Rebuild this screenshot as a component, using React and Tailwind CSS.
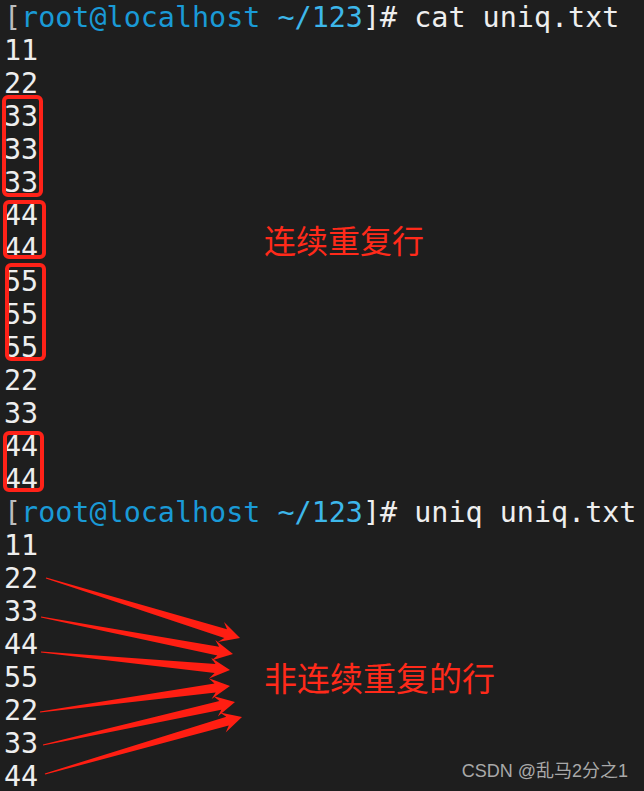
import React from "react";

const W = "text-[#eeeeee]";
const BOX = "absolute border-[4px] border-[#ff2218] rounded-[6px] pointer-events-none";

function Prompt({ cmd }) {
  return (
    <div>
      <span className="text-[#bdbdbd]">[</span>
      <span className="text-[#1a9ad6]">root@localhost</span>
      <span> </span>
      <span className="text-[#3db7ea]">~/123</span>
      <span className={W}>]# {cmd}</span>
    </div>
  );
}

function Line({ t }) {
  return <div>{t}</div>;
}

function Group({ items, boxClass }) {
  return (
    <div className="relative">
      {items.map((t, i) => (
        <Line key={i} t={t} />
      ))}
      <div className={`${BOX} ${boxClass}`} />
    </div>
  );
}

const arrows = [
  [46, 578, 240, 638],
  [41, 617, 233, 654],
  [41, 652, 230, 670],
  [40, 712, 230, 686],
  [43, 745, 235, 702],
  [45, 774, 242, 717],
];

function arrowPoints([x0, y0, x1, y1]) {
  const dx = x1 - x0;
  const dy = y1 - y0;
  const L = Math.hypot(dx, dy);
  const ux = dx / L;
  const uy = dy / L;
  const nx = -uy;
  const ny = ux;
  const hl = 15;
  const hw = 10.5;
  const sw = 4.5;
  const back = 5;
  const bx = x1 - ux * hl;
  const by = y1 - uy * hl;
  const p = [
    [x0 + nx * 0.6, y0 + ny * 0.6],
    [bx + nx * sw, by + ny * sw],
    [bx - ux * back + nx * hw, by - uy * back + ny * hw],
    [x1, y1],
    [bx - ux * back - nx * hw, by - uy * back - ny * hw],
    [bx - nx * sw, by - ny * sw],
    [x0 - nx * 0.6, y0 - ny * 0.6],
  ];
  return p.map((q) => q[0].toFixed(1) + "," + q[1].toFixed(1)).join(" ");
}

export default function App() {
  return (
    <div className="relative w-[644px] h-[791px] bg-[#1e1e1e] overflow-hidden">
      <div
        className={`flex flex-col pl-[4px] pt-[1px] text-[28.4px] leading-[33px] whitespace-pre ${W}`}
        style={{ fontFamily: '"DejaVu Sans Mono", monospace' }}
      >
        <Prompt cmd="cat uniq.txt" />
        <Line t="11" />
        <Line t="22" />
        <Group items={["33", "33", "33"]} boxClass="-left-[2px] -top-[5px] bottom-[2px] w-[41px]" />
        <Group items={["44", "44"]} boxClass="-left-[1px] top-[1px] bottom-[6px] w-[43px]" />
        <Group items={["55", "55", "55"]} boxClass="left-[1px] -top-[2px] bottom-[3px] w-[41px]" />
        <Line t="22" />
        <Line t="33" />
        <Group items={["44", "44"]} boxClass="-left-[1px] top-[1px] bottom-[4px] w-[41px]" />
        <Prompt cmd="uniq uniq.txt" />
        {["11", "22", "33", "44", "55", "22", "33", "44"].map((t, i) => (
          <Line key={i} t={t} />
        ))}
      </div>

      {/* annotations */}
      <div
        className="absolute left-[264px] top-[219px] text-[32px] leading-[40px] text-[#ff2a1a]"
        style={{ fontFamily: '"Noto Sans CJK SC", sans-serif' }}
      >
        连续重复行
      </div>
      <div
        className="absolute left-[264px] top-[656px] text-[33px] leading-[42px] text-[#ff2a1a]"
        style={{ fontFamily: '"Noto Sans CJK SC", sans-serif' }}
      >
        非连续重复的行
      </div>

      <svg className="absolute left-0 top-0 pointer-events-none" width="644" height="791" viewBox="0 0 644 791">
        {arrows.map((a, i) => (
          <polygon key={i} points={arrowPoints(a)} fill="#ff1e12" />
        ))}
      </svg>

      <div
        className="absolute right-[16px] bottom-[8px] text-[18px] leading-[24px] text-[#a9a9a9]"
        style={{ fontFamily: '"Liberation Sans", "Noto Sans CJK SC", sans-serif' }}
      >
        CSDN @乱马2分之1
      </div>
    </div>
  );
}
